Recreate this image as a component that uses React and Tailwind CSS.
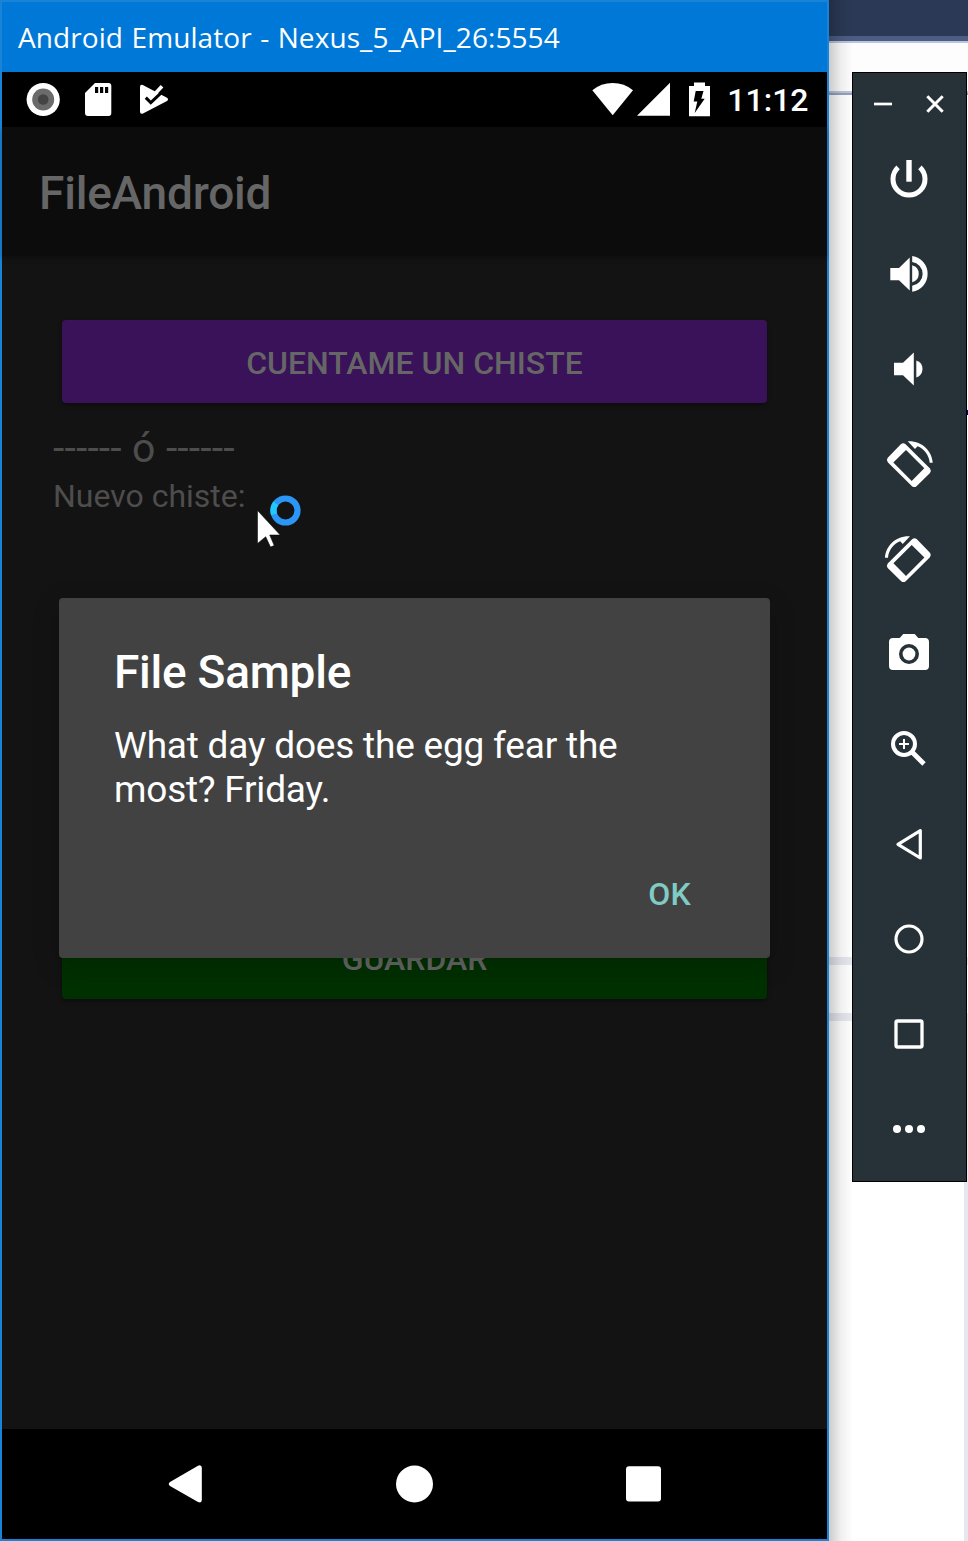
function ToolCell({ children }) {
  return (
    <button className="flex h-[95px] w-full shrink-0 items-center justify-center">
      <svg width="49" height="49" viewBox="0 0 49 49" fill="white" className="overflow-visible">
        {children}
      </svg>
    </button>
  );
}

function RotatePhone() {
  return (
    <>
      <path
        fillRule="evenodd"
        d="M3 17.6 15.8 4.2Q18.2 2.2 20.6 4.2L45 28.4Q46.6 30.7 45 33L31.5 46.2Q29.3 48 27 46.2L3 22.4Q1 20 3 17.6ZM21 10 8.3 22.6 26.7 41 39.3 28.3Z"
      />
      <path d="M22.7 1.3C37 .6 47 11 47.7 22.7H44.7C44 15 39 8.8 32.5 6.3L30 9Z" />
    </>
  );
}

function EmulatorToolbar() {
  return (
    <aside className="absolute left-[852px] top-[72px] flex h-[1110px] w-[115px] flex-col border border-black bg-[#273238]">
      <svg width="113" height="59" viewBox="0 0 113 59" className="shrink-0">
        <path d="M21 31h18" stroke="white" strokeWidth="2.7" />
        <path d="M74.3 23.3 89.7 38.7M89.7 23.3 74.3 38.7" stroke="white" strokeWidth="3" />
      </svg>
      <ToolCell>
        <path d="M13.1 12.4A16 16 0 1 0 34.9 12.4" fill="none" stroke="white" strokeWidth="5" />
        <path d="M21.3 5h5.4v21.7h-5.4z" />
      </ToolCell>
      <ToolCell>
        <path d="M5.3 18H14L24.7 7.6V40.4L14 30.3H5.3Z" />
        <path d="M27.2 15.3A8.8 8.8 0 0 1 27.2 32.3Z" />
        <path d="M27.2 6A18.1 18.1 0 0 1 27.2 41.8V35.8A12 12 0 0 0 27.2 12Z" />
      </ToolCell>
      <ToolCell>
        <path d="M9 17.7H18L28.8 7.6V40.4L18 30.3H9Z" />
        <path d="M31.3 15.6A8.8 8.8 0 0 1 31.3 32.4Z" />
      </ToolCell>
      <ToolCell>
        <RotatePhone />
      </ToolCell>
      <ToolCell>
        <g transform="translate(47.7 0) scale(-1 1)">
          <RotatePhone />
        </g>
      </ToolCell>
      <ToolCell>
        <path
          fillRule="evenodd"
          d="M8 8H14.7L18.3 4H29.7L33.3 8H40Q44 8 44 12V36Q44 40 40 40H8Q4 40 4 36V12Q4 8 8 8ZM24 14A10 10 0 1 0 24 34 10 10 0 1 0 24 14Z"
        />
        <circle cx="24" cy="24" r="6.4" />
      </ToolCell>
      <ToolCell>
        <circle cx="19" cy="19" r="11" fill="none" stroke="white" strokeWidth="4" />
        <path d="M14 19h10M19 14v10" stroke="white" strokeWidth="2" />
        <path d="M27 27 39 39" stroke="white" strokeWidth="4.8" />
      </ToolCell>
      <ToolCell>
        <path d="M13 24.3 35.3 10.6V38Z" fill="none" stroke="white" strokeWidth="3.2" strokeLinejoin="round" />
      </ToolCell>
      <ToolCell>
        <circle cx="24" cy="24" r="13" fill="none" stroke="white" strokeWidth="3.2" />
      </ToolCell>
      <ToolCell>
        <rect x="11" y="11" width="26" height="26" rx="1.5" fill="none" stroke="white" strokeWidth="3.3" />
      </ToolCell>
      <ToolCell>
        <circle cx="12" cy="24" r="4" />
        <circle cx="24" cy="24" r="4" />
        <circle cx="36" cy="24" r="4" />
      </ToolCell>
    </aside>
  );
}

function StatusBar() {
  return (
    <div className="flex h-[55px] shrink-0 items-center justify-between bg-black pr-[18.5px]">
      <svg width="180" height="55" viewBox="2 72 180 55" fill="white">
        <circle cx="43.2" cy="99.5" r="16.6" />
        <circle cx="43.2" cy="99.5" r="11" fill="#6b6b6b" />
        <circle cx="43.2" cy="99.5" r="5.3" fill="#444" />
        <path d="M95 83H108.5Q111.3 83 111.3 86V113Q111.3 116 108.500 116H88Q85 116 85 113V93Z" />
        <path d="M95 87h3.2v6H95zM100 87h3.2v6H100zM105 87h3.2v6H105z" fill="black" />
        <path d="M140 87Q140 84 142.8 85L167 97.800Q169 99.500 167 101L143 113.600Q140 114.500 140 111.500Z" />
        <path d="M151.500 97.500 162 86.300" stroke="white" strokeWidth="3.600" />
        <path d="M145.800 97.600 150.800 102.600 163 91.200" fill="none" stroke="black" strokeWidth="3" />
      </svg>
      <div className="flex items-center">
        <svg className="mr-px" width="136" height="55" viewBox="590 72 136 55" fill="white">
          <path d="M592.3 90.3Q601 83 612.7 83T633 90.3L612.7 115.3Z" />
          <path d="M637 115.8 670 82.8V115.8Z" />
          <path
            fillRule="evenodd"
            d="M694 82.5H705V86H710V116.3H689V86H694ZM695.7 91 693.7 101.5H697.3L694.7 113 704.7 98.7H701.3L703.5 91Z"
          />
        </svg>
        <span className="text-[32px] font-medium leading-[38px] text-white">11:12</span>
      </div>
    </div>
  );
}

function NavigationBar() {
  return (
    <nav className="flex h-[110px] shrink-0 items-center justify-center bg-black">
      <svg width="825" height="110" viewBox="2 1429 825 110" fill="white">
        <path d="M170 1482 198 1465.7Q201.8 1464.4 201.8 1468V1500Q201.8 1503.5 198 1502L170 1486Q167.5 1484 170 1482Z" />
        <circle cx="414.5" cy="1484" r="18.5" />
        <rect x="626" y="1466.3" width="35" height="35.2" rx="3" />
      </svg>
    </nav>
  );
}

function Dialog() {
  return (
    <div
      role="dialog"
      className="absolute left-[57px] top-[596px] flex h-[359.5px] w-[711px] flex-col rounded-[4px] bg-[#424242] px-[55px] pt-[47px] text-white shadow-[0_8px_28px_rgba(0,0,0,0.2)]"
    >
      <h2 className="text-[46px] font-medium leading-[54px] tracking-[-0.25px]">File Sample</h2>
      <p className="mt-[25px] text-[37px] leading-[44px] tracking-[-0.2px]">
        What day does the egg fear the
        <br />
        most? Friday.
      </p>
      <button className="mr-[24px] mt-[63px] self-end text-[32px] font-medium leading-[38px] tracking-[0.3px] text-[#80cbc4]">
        OK
      </button>
    </div>
  );
}

function BusyCursor() {
  return (
    <svg className="absolute left-[248px] top-[488px]" width="60" height="66" viewBox="250 490 60 66">
      <circle cx="285.5" cy="510.500" r="12" fill="none" stroke="#2b96f5" strokeWidth="6.2" />
      <path d="M275.8 503.4A12 12 0 0 0 274.1 514.2" fill="none" stroke="#20c8fc" strokeWidth="6.2" />
      <path
        d="M257.5 510.5V543.5L265.7 536.7 270.5 547 274.2 545.5 269.7 535H280.2Z"
        fill="white"
        stroke="black"
        strokeWidth="0.5"
      />
    </svg>
  );
}

export default function App() {
  return (
    <div className="relative flex h-[1541px] w-[968px] overflow-hidden bg-white font-['Roboto',sans-serif]">
      <section className="relative flex h-[1541px] w-[829px] shrink-0 flex-col border-2 border-[#1883d7] bg-[#131313]">
        <header className="flex h-[70px] shrink-0 items-center bg-[#0078d7] pl-4 font-['Open_Sans',sans-serif] text-[28px] tracking-[0.08px] text-white">
          <span className="whitespace-nowrap [word-spacing:1.1px]">Android Emulator - Nexus_5_API_26:5554</span>
        </header>
        <StatusBar />
        <div className="flex h-[129px] shrink-0 items-center bg-[#0c0c0c] pl-[37px] pt-[3px] text-[46px] font-medium tracking-[-0.2px] text-[#666] shadow-[0_2px_5px_rgba(0,0,0,0.25)]">
          FileAndroid
        </div>
        <main className="flex min-h-0 flex-1 flex-col pt-16 text-[#4d4d4d]">
          <button className="mx-[60px] h-[83px] w-[705px] shrink-0 rounded-[4px] bg-[#391259] pt-[2px] text-[32px] font-medium text-[#666] shadow-[0_2px_4px_rgba(0,0,0,0.4)]">
            CUENTAME UN CHISTE
          </button>
          <p className="mt-[21px] pl-[51px] text-[41px] leading-[48px] tracking-[0.13px]">------ ó ------</p>
          <p className="pl-[51px] text-[32px] leading-[48px]">Nuevo chiste:</p>
          <button className="mx-[60px] mt-[396px] h-[83px] w-[705px] shrink-0 rounded-[4px] bg-[#003000] pt-[2px] text-[32px] font-medium text-[#666] shadow-[0_2px_4px_rgba(0,0,0,0.4)]">
            GUARDAR
          </button>
        </main>
        <NavigationBar />
        <Dialog />
        <BusyCursor />
      </section>
      <div className="relative flex flex-1 flex-col bg-white">
        <div className="h-9 bg-[#2b3956]" />
        <div className="h-[5px] bg-[#4c5d84]" />
        <div className="h-[2px] bg-[#bcc4de]" />
        <div className="h-12 bg-[#fdfdfd]" />
        <div className="h-[2px] bg-[#bcc4dc]" />
        <div className="h-[2px] bg-[#96a2bd]" />
        <div className="h-[315px]" />
        <div className="h-[5px] w-[1px] self-end bg-[#00007a]" />
        <div className="h-[542px]" />
        <div className="h-2 bg-[#e6e7ef]" />
        <div className="h-12" />
        <div className="h-2 bg-[#e6e7ef]" />
        <div className="w-1 flex-1 self-end bg-[#e6e7ef]" />
        <div className="absolute inset-y-0 left-0 w-6 bg-linear-to-r from-black/20 via-black/6 to-transparent" />
      </div>
      <EmulatorToolbar />
    </div>
  );
}
